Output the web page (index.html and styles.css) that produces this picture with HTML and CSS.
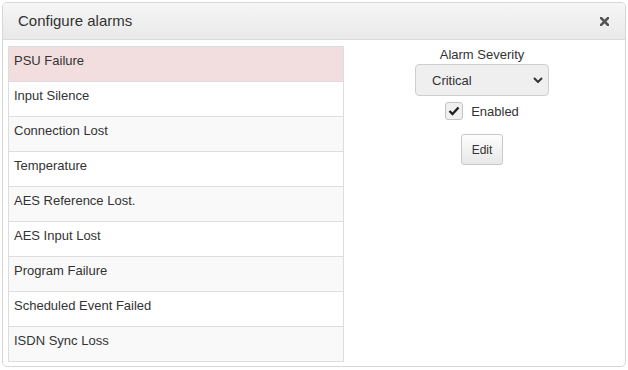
FILE: index.html
```
<!DOCTYPE html>
<html lang="en">
<head>
  <meta charset="UTF-8" />
  <title>Configure alarms</title>
  <link rel="stylesheet" href="styles.css">
</head>
<body>

  <div class="dialog">
    <div class="dialog-header">
      <span class="dialog-title">Configure alarms</span>
      <span class="close-btn" title="Close">
        <svg width="9" height="9" viewBox="0 0 9 9">
          <path d="M1 1 L8 8 M8 1 L1 8" stroke="#555" stroke-width="2.6" stroke-linecap="square" />
        </svg>
      </span>
    </div>

    <div class="dialog-body">
      <ul class="alarm-list">
        <li class="alarm danger">PSU Failure</li>
        <li class="alarm">Input Silence</li>
        <li class="alarm">Connection Lost</li>
        <li class="alarm">Temperature</li>
        <li class="alarm">AES Reference Lost.</li>
        <li class="alarm">AES Input Lost</li>
        <li class="alarm">Program Failure</li>
        <li class="alarm">Scheduled Event Failed</li>
        <li class="alarm">ISDN Sync Loss</li>
      </ul>

      <div class="alarm-settings">
        <div class="label">Alarm Severity</div>
        <div class="select">
          <span>Critical</span>
          <svg width="10" height="6" viewBox="0 0 10 6">
            <path d="M1 1 L5 5 L9 1" fill="none" stroke="#333" stroke-width="2" />
          </svg>
        </div>
        <label class="check-row">
          <span class="checkbox">
            <svg width="12" height="10" viewBox="0 0 12 10">
              <path d="M1.5 5 L4.5 8 L10.5 1.5" fill="none" stroke="#222" stroke-width="2.4" />
            </svg>
          </span>
          <span>Enabled</span>
        </label>
        <button class="edit-btn">Edit</button>
      </div>
    </div>
  </div>

</body>
</html>
```

FILE: styles.css
```
* {
  margin: 0;
  padding: 0;
  box-sizing: border-box;
}

body {
  font-family: 'Liberation Sans', Arial, sans-serif;
  background: #fff;
  color: #333;
}

.dialog {
  margin: 2px 3px 0 2px;
  width: 624px;
  height: 365px;
  border: 1px solid #d6d6d6;
  border-radius: 5px;
  overflow: hidden;
  display: flex;
  flex-direction: column;
}

.dialog-header {
  display: flex;
  align-items: center;
  justify-content: space-between;
  height: 38px;
  padding: 0 16px 1px 15px;
  background: linear-gradient(#f6f6f6, #e9e9e9);
  border-bottom: 1px solid #dcdcdc;
}

.dialog-title {
  font-size: 15px;
  color: #333;
}

.close-btn {
  display: flex;
  cursor: pointer;
  margin-top: 2px;
}

.dialog-body {
  display: flex;
  padding: 6px 5px 4px;
}

.alarm-list {
  list-style: none;
  width: 336px;
  border: 1px solid #ddd;
}

.alarm {
  height: 35px;
  padding: 5px 5px 0;
  font-size: 13px;
  line-height: 18px;
  border-bottom: 1px solid #ddd;
}

.alarm:nth-child(odd) {
  background: #f9f9f9;
}

.alarm:last-child {
  height: 34px;
  border-bottom: none;
}

.alarm.danger {
  background: #f2dede;
}

.alarm-settings {
  flex: 1;
  display: flex;
  flex-direction: column;
  align-items: center;
  font-size: 13px;
}

.label {
  line-height: 18px;
}

.select {
  width: 134px;
  height: 32px;
  display: flex;
  align-items: center;
  justify-content: space-between;
  padding: 0 5px 0 16px;
  background: #efefef;
  border: 1px solid #cfcfcf;
  border-radius: 4px;
}

.check-row {
  display: flex;
  align-items: center;
  gap: 8px;
  margin-top: 6px;
}

.checkbox {
  width: 18px;
  height: 18px;
  display: flex;
  align-items: center;
  justify-content: center;
  background: #f0f0f0;
  border: 1px solid #c4c4c4;
  border-radius: 3px;
}

.edit-btn {
  margin-top: 14px;
  width: 42px;
  height: 31px;
  font-family: inherit;
  font-size: 12px;
  color: #333;
  background: linear-gradient(#fdfdfd, #e8e8e8);
  border: 1px solid #c8c8c8;
  border-radius: 3px;
  cursor: pointer;
}
```
